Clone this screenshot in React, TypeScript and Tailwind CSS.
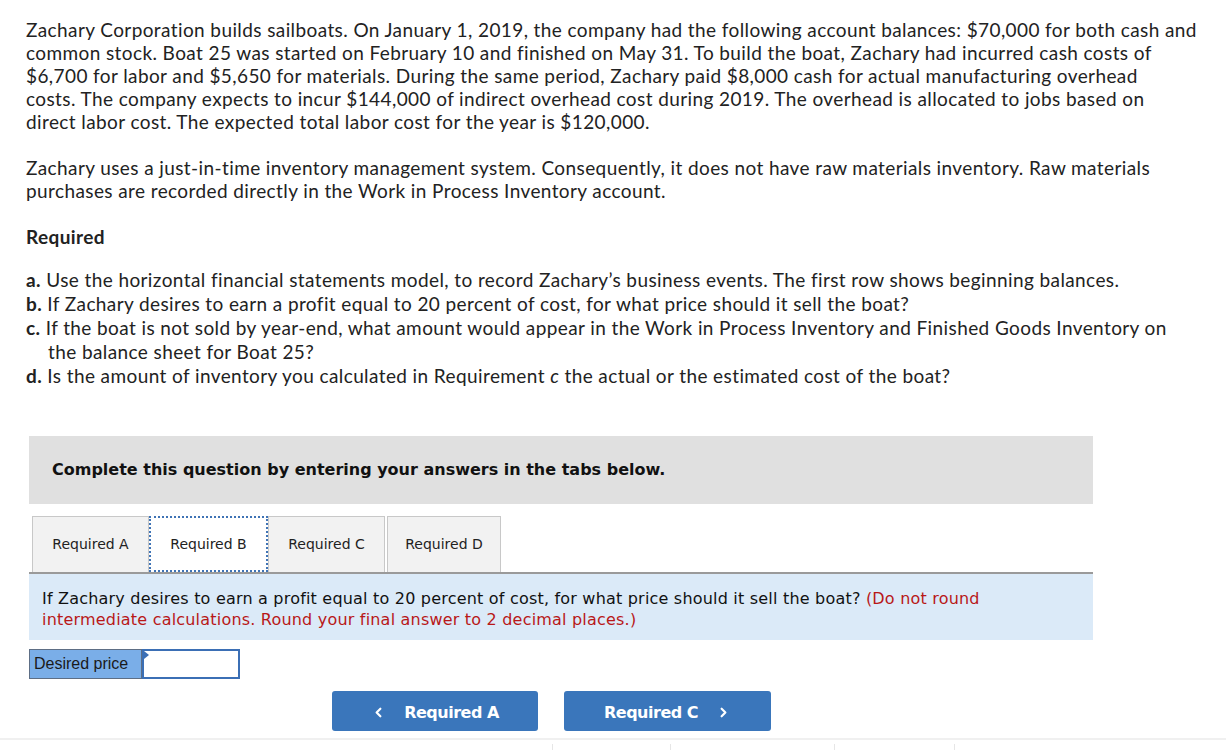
import React from "react"
import { ChevronLeft, ChevronRight } from "lucide-react"

const bodyFont = "font-['Lato','Open_Sans',sans-serif]"
const tabFont = "font-['DejaVu_Sans','Verdana',sans-serif]"

const tabs = ["Required A", "Required B", "Required C", "Required D"]

export default function App() {
  return (
    <div className={`min-h-[751px] w-[1226px] bg-white text-[#222] ${bodyFont}`}>
      {/* Problem text */}
      <div className="px-[26px] pt-[18px] text-[19px] leading-[23px] tracking-[0.4px] whitespace-nowrap">
        <p>
          Zachary Corporation builds sailboats. On January 1, 2019, the company had the following account balances: $70,000 for both cash and
          <br />
          common stock. Boat 25 was started on February 10 and finished on May 31. To build the boat, Zachary had incurred cash costs of
          <br />
          $6,700 for labor and $5,650 for materials. During the same period, Zachary paid $8,000 cash for actual manufacturing overhead
          <br />
          costs. The company expects to incur $144,000 of indirect overhead cost during 2019. The overhead is allocated to jobs based on
          <br />
          direct labor cost. The expected total labor cost for the year is $120,000.
        </p>
        <p className="mt-[23px]">
          Zachary uses a just-in-time inventory management system. Consequently, it does not have raw materials inventory. Raw materials
          <br />
          purchases are recorded directly in the Work in Process Inventory account.
        </p>
        <p className="mt-[23px] font-bold">Required</p>
        <ul className="mt-[20px] leading-[24px]">
          <li>
            <b>a.</b> Use the horizontal financial statements model, to record Zachary’s business events. The first row shows beginning balances.
          </li>
          <li>
            <b>b.</b> If Zachary desires to earn a profit equal to 20 percent of cost, for what price should it sell the boat?
          </li>
          <li className="pl-[22px] -indent-[22px]">
            <b>c.</b> If the boat is not sold by year-end, what amount would appear in the Work in Process Inventory and Finished Goods Inventory on
            <br />
            the balance sheet for Boat 25?
          </li>
          <li>
            <b>d.</b> Is the amount of inventory you calculated in Requirement <i>c</i> the actual or the estimated cost of the boat?
          </li>
        </ul>
      </div>

      {/* Tabbed question area */}
      <div className={`ml-[29px] mt-[48px] w-[1064px] ${tabFont}`}>
        <div className="flex h-[68px] items-center bg-[#e0e0e0] pl-[23px] text-[16px] font-bold text-[#111]">
          Complete this question by entering your answers in the tabs below.
        </div>

        <div className="mt-[10px] flex h-[58px] items-stretch pl-[3px] pt-[2px] text-[14px] text-[#222]">
          {tabs.map((t, i) => (
            <div
              key={t}
              className={
                i === 1
                  ? "flex w-[119px] items-center justify-center border-2 border-dotted border-[#3f73b5] bg-white"
                  : i === 3
                    ? "ml-[2px] flex w-[114px] items-center justify-center border border-b-0 border-[#c8c8c8] bg-[#f2f2f2]"
                    : "flex w-[117px] items-center justify-center border border-b-0 border-[#c8c8c8] bg-[#f2f2f2]"
              }
            >
              {t}
            </div>
          ))}
        </div>

        <div className="h-[68px] border-t-2 border-[#9a9a9a] bg-[#dbeaf8] px-[13px] pt-[14px] text-[16px] leading-[21px] tracking-[0.2px] text-[#111]">
          If Zachary desires to earn a profit equal to 20 percent of cost, for what price should it sell the boat?{" "}
          <span className="text-[#b81818]">
            (Do not round
            <br />
            intermediate calculations. Round your final answer to 2 decimal places.)
          </span>
        </div>

        <div className="mt-[9px] flex h-[30px] font-['Liberation_Sans',Arial,sans-serif] text-[16px]">
          <div className="flex w-[113px] items-center border border-[#5d6e85] bg-[#7aaee8] pl-[4px] text-[#1a1a1a]">
            Desired price
          </div>
          <div className="relative w-[98px] border-2 border-[#3b6fb5] bg-white">
            <span className="absolute left-0 top-0 h-0 w-0 border-y-[4px] border-l-[5px] border-y-transparent border-l-[#3b6fb5]" />
          </div>
        </div>

        <div className="mt-[12px] flex gap-[26px] pl-[303px]">
          <button className="flex h-[40px] w-[206px] items-center justify-center gap-[18px] rounded-[3px] bg-[#3a76bb] pt-[3px] text-[16px] font-bold tracking-[-0.5px] text-white">
            <ChevronLeft className="h-[15px] w-[15px]" strokeWidth={3.5} />
            <span>Required A</span>
          </button>
          <button className="flex h-[40px] w-[207px] items-center justify-center gap-[18px] rounded-[3px] bg-[#3a76bb] pt-[3px] text-[16px] font-bold tracking-[-0.5px] text-white">
            <span>Required C</span>
            <ChevronRight className="h-[15px] w-[15px]" strokeWidth={3.5} />
          </button>
        </div>
      </div>

      {/* Footer strip */}
      <div className="mt-[7px] h-[12px] border-t-2 border-[#f0f0f0]">
        <div className="flex h-full items-end pl-[552px]">
          <div className="h-[6px] w-[118px] border-l border-[#e6e6e6]" />
          <div className="h-[6px] w-[164px] border-l border-[#e6e6e6]" />
          <div className="h-[6px] w-[120px] border-l border-[#e6e6e6]" />
          <div className="h-[6px] border-l border-[#e6e6e6]" />
        </div>
      </div>
    </div>
  )
}
